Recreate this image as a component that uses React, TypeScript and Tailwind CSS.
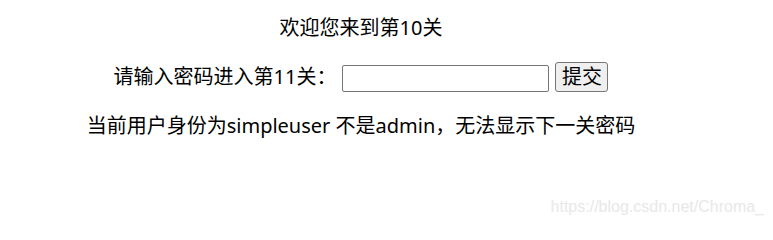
import React from "react";

export default function App() {
  return (
    <div
      className="relative h-[224px] w-[773px] bg-white text-black"
      style={{ fontFamily: '"Noto Sans", "Noto Sans CJK SC", sans-serif' }}
    >
      <div className="w-[722px] pt-[14px] text-center text-[20px] leading-[28px]">
        <p>欢迎您来到第10关</p>
        <div className="mt-[20px] flex items-center justify-center">
          <span>请输入密码进入第11关：</span>
          <input
            type="text"
            className="ml-[6px] mt-[3px] h-[27px] w-[207px] rounded-[2px] border border-[#767676] bg-white px-1 text-[14px] outline-none"
          />
          <button className="ml-[6px] h-[30px] w-[53px] rounded-[3px] border border-[#767676] bg-[#efefef] text-[20px] leading-[26px]">
            提交
          </button>
        </div>
        <p className="mt-[20px]">当前用户身份为simpleuser 不是admin，无法显示下一关密码</p>
      </div>
      <div
        className="absolute bottom-[8px] right-[9px] text-[16px] leading-[18px] text-[#e8e8e8]"
        style={{ fontFamily: '"Liberation Sans", Arial, sans-serif' }}
      >
        https://blog.csdn.net/Chroma_
      </div>
    </div>
  );
}
